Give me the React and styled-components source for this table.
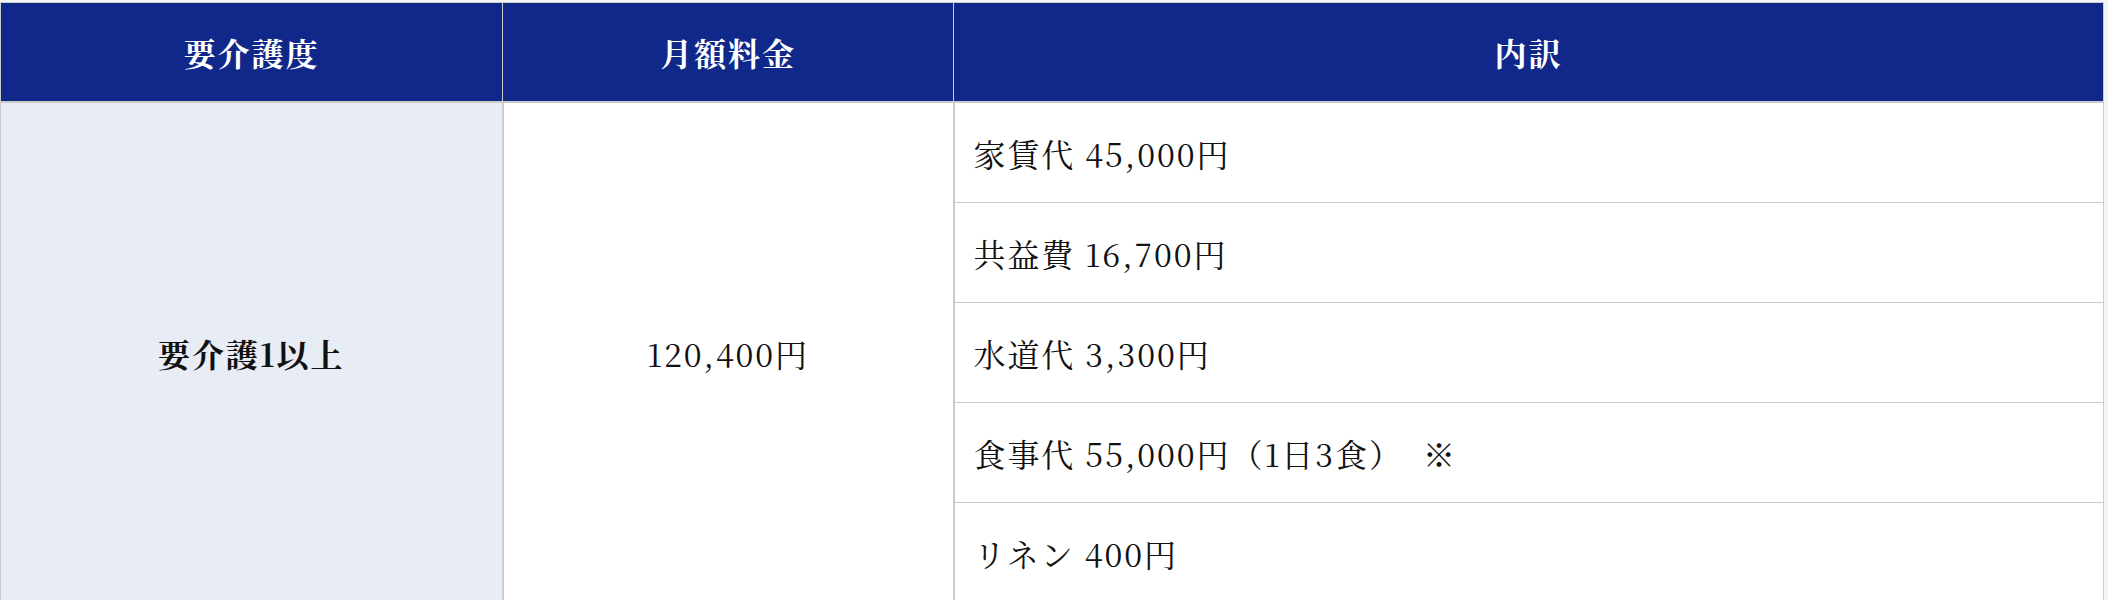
import React from "react";
import styled, { createGlobalStyle } from "styled-components";

const GlobalStyle = createGlobalStyle`
  body {
    margin: 0;
    padding-top: 2px;
    background: #f4f5f8;
    font-family: "Noto Serif CJK JP", "Liberation Serif", "Noto Sans CJK JP", serif;
    color: #111;
  }
`;

const FeeTable = styled.table`
  width: 2104px;
  border-collapse: collapse;
  table-layout: fixed;
  border: 1px solid #cccccc;
  font-size: 32px;
  letter-spacing: 0.06em;
`;

const HeadCell = styled.th`
  height: 98px;
  padding: 0;
  background: #10288a;
  color: #fff;
  font-weight: 700;
  text-align: center;
  border: 1px solid #cccccc;
  border-bottom-width: 2px;
  width: ${(p) => p.$width}px;
`;

const LevelCell = styled.td`
  background: #e8ecf5;
  text-align: center;
  font-weight: 700;
  border: 1px solid #cccccc;
  border-right-width: 2px;
`;

const PriceCell = styled.td`
  background: #fff;
  text-align: center;
  border: 1px solid #cccccc;
`;

const ItemCell = styled.td`
  height: 99px;
  padding: 0 0 0 19px;
  background: #fff;
  text-align: left;
  white-space: pre;
  border: 1px solid #cccccc;
  border-left-width: 2px;
`;

const items = [
  "家賃代 45,000円",
  "共益費 16,700円",
  "水道代 3,300円",
  "食事代 55,000円（1日3食）  ※",
  "リネン 400円",
];

export default function App() {
  return (
    <>
      <GlobalStyle />
      <FeeTable>
        <thead>
          <tr>
            <HeadCell $width={501}>要介護度</HeadCell>
            <HeadCell $width={450}>月額料金</HeadCell>
            <HeadCell>内訳</HeadCell>
          </tr>
        </thead>
        <tbody>
          {items.map((item, idx) => (
            <tr key={idx}>
              {idx === 0 && (
                <>
                  <LevelCell rowSpan={items.length}>要介護1以上</LevelCell>
                  <PriceCell rowSpan={items.length}>120,400円</PriceCell>
                </>
              )}
              <ItemCell>{item}</ItemCell>
            </tr>
          ))}
        </tbody>
      </FeeTable>
    </>
  );
}
